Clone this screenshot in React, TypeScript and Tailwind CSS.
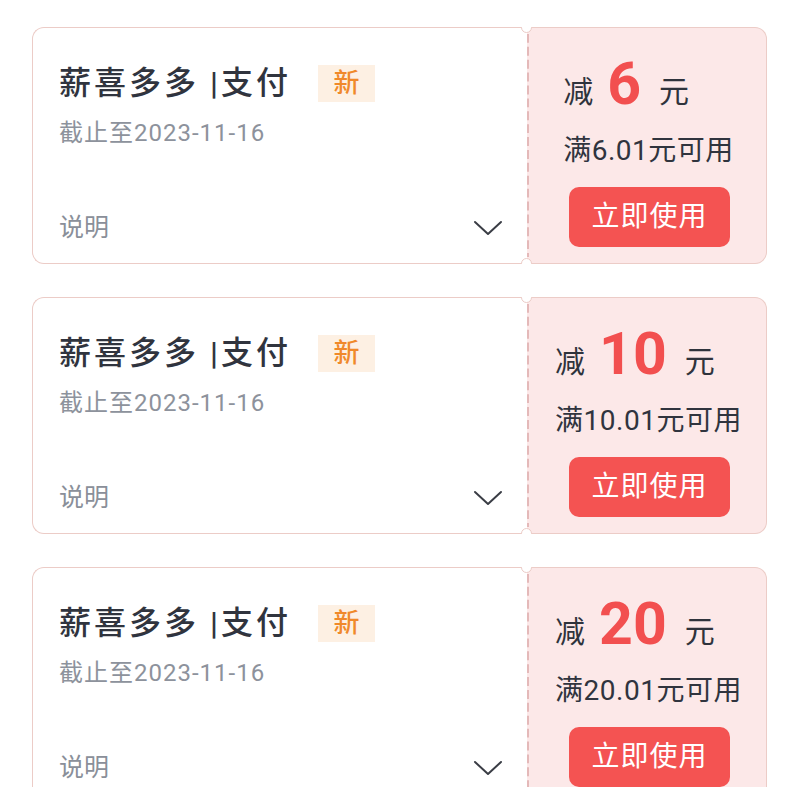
import React from 'react'

const coupons = [
    { amount: '6', min: '6.01', date: '2023-11-16' },
    { amount: '10', min: '10.01', date: '2023-11-16' },
    { amount: '20', min: '20.01', date: '2023-11-16' },
]

function Chevron() {
    return (
        <svg width="30" height="16" viewBox="0 0 30 16" fill="none">
            <polyline points="2,2 15,14 28,2" stroke="#3a3d45" strokeWidth="2" strokeLinecap="round" strokeLinejoin="round" />
        </svg>
    )
}

function CouponCard({ amount, min, date }: { amount: string; min: string; date: string }) {
    return (
        <div className="relative flex h-[237px]">
            {/* 左侧信息 */}
            <div className="flex-1 flex flex-col bg-white border border-r-0 border-[#ecccc7] rounded-l-[12px] pl-[26px] pr-[24px]">
                <div className="flex items-center h-[40px] mt-[35px]">
                    <span className="text-[32px] leading-[40px] font-medium text-[#30343e] tracking-[3px]">薪喜多多 |支付</span>
                    <span className="ml-[27px] h-[37px] w-[57px] flex items-center justify-center bg-[#fdf0e3] text-[#f0892a] text-[26px] font-medium leading-none">新</span>
                </div>
                <div className="mt-[15px] h-[30px] leading-[30px] text-[24px] text-[#8d929c] tracking-[1px]">截止至{date}</div>
                <div className="mt-auto mb-[20px] flex items-center justify-between">
                    <span className="text-[25px] leading-[30px] text-[#8a8f99]">说明</span>
                    <Chevron />
                </div>
            </div>

            {/* 右侧金额 */}
            <div className="relative w-[240px] flex flex-col items-center bg-[#fce8e8] border border-l-0 border-[#ecccc7] rounded-r-[12px]">
                <svg className="absolute left-0 top-0 h-full" width="2" height="237" viewBox="0 0 2 237" preserveAspectRatio="none">
                    <line x1="1" y1="6" x2="1" y2="231" stroke="#dba9a9" strokeWidth="1.5" strokeDasharray="9 4" />
                </svg>
                <div className="flex flex-col items-start mt-[30px] ml-[4px]">
                    <div className="flex items-end h-[56px] text-[#2f333c]">
                        <span className="text-[30px] leading-[40px] pb-[2px]">减</span>
                        <span className="ml-[14px] mr-[18px] text-[59px] leading-[56px] font-bold text-[#f24f4f] -translate-y-[2px]">{amount}</span>
                        <span className="text-[30px] leading-[40px] pb-[2px]">元</span>
                    </div>
                    <div className="mt-[19px] h-[36px] leading-[36px] text-[28px] text-[#30343e] tracking-[0.5px]">满{min}元可用</div>
                </div>
                <button className="mt-[18px] ml-[6px] w-[161px] h-[60px] rounded-[10px] bg-[#f45352] text-white text-[28px] tracking-[1px]">立即使用</button>
            </div>

            {/* 缺口 */}
            <div className="absolute right-[235px] -top-[5px] w-[11px] h-[11px] rounded-full bg-white border border-[#ecccc7]" />
            <div className="absolute right-[235px] -bottom-[5px] w-[11px] h-[11px] rounded-full bg-white border border-[#ecccc7]" />
            <div className="absolute right-[234px] -top-[6px] w-[13px] h-[6px] bg-white" />
            <div className="absolute right-[234px] -bottom-[6px] w-[13px] h-[6px] bg-white" />
        </div>
    )
}

export default function App() {
    return (
        <div className="min-h-screen bg-white" style={{ fontFamily: 'Roboto, "Noto Sans CJK SC", sans-serif' }}>
            <div className="flex flex-col gap-[33px] pl-[32px] pr-[33px] pt-[27px] pb-10">
                {coupons.map((c, i) => (
                    <CouponCard key={i} {...c} />
                ))}
            </div>
        </div>
    )
}
